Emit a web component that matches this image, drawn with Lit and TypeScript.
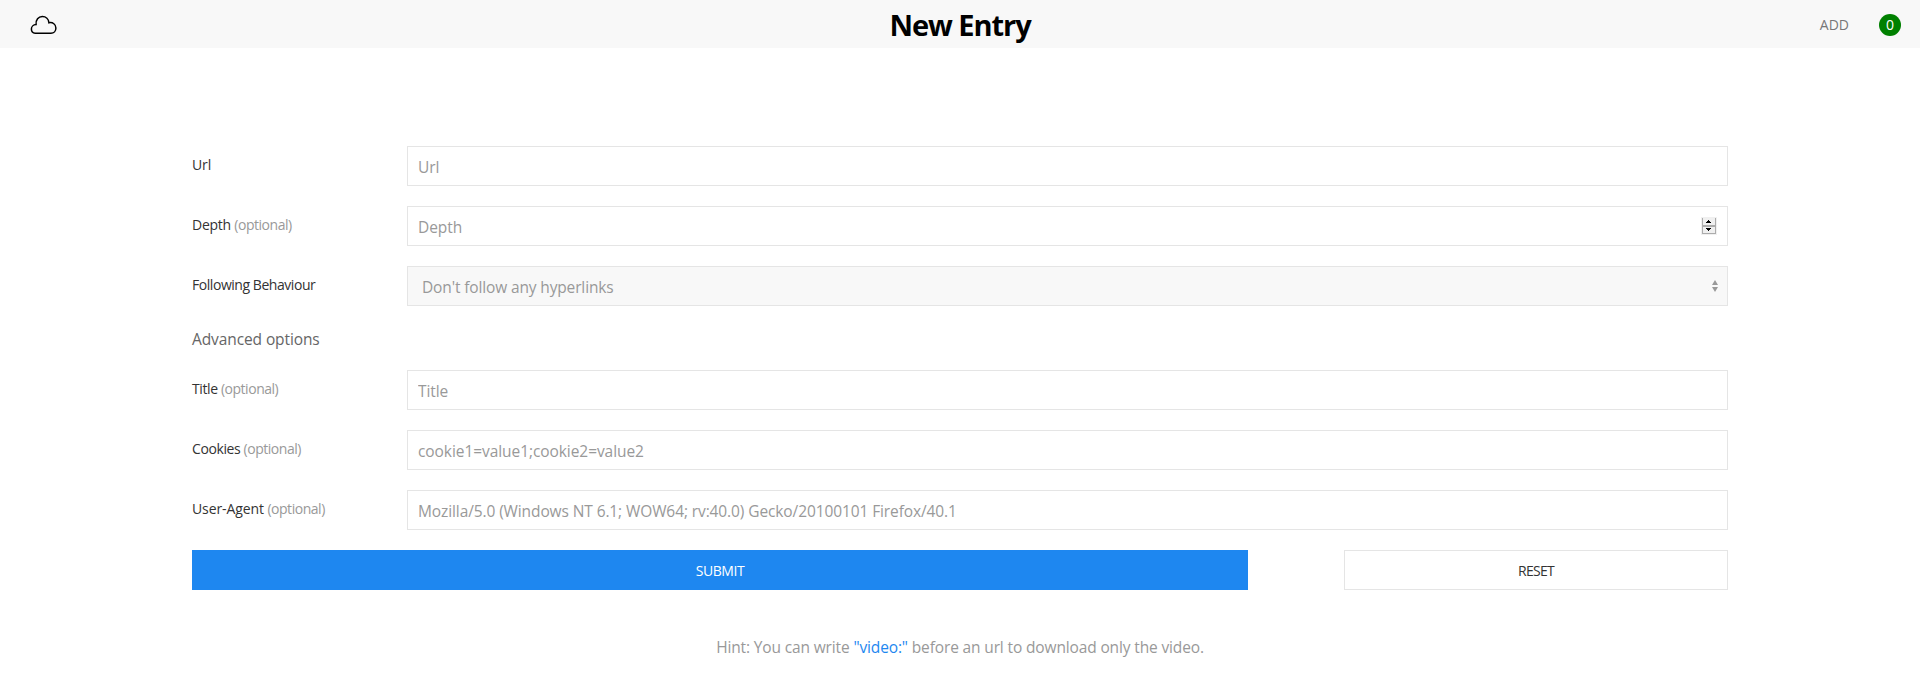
import { LitElement, html, css, nothing } from "lit";

interface Field {
  id: string;
  label: string;
  placeholder: string;
  optional?: boolean;
  stepper?: boolean;
}

const MAIN: Field[] = [
  { id: "url", label: "Url", placeholder: "Url" },
  { id: "depth", label: "Depth", placeholder: "Depth", optional: true, stepper: true },
];

const ADVANCED: Field[] = [
  { id: "title", label: "Title", placeholder: "Title", optional: true },
  { id: "cookies", label: "Cookies", placeholder: "cookie1=value1;cookie2=value2", optional: true },
  {
    id: "agent",
    label: "User-Agent",
    placeholder: "Mozilla/5.0 (Windows NT 6.1; WOW64; rv:40.0) Gecko/20100101 Firefox/40.1",
    optional: true,
  },
];

class AppRoot extends LitElement {
  static styles = css`
    :host {
      display: block;
      height: 674px;
      overflow: hidden;
      background: #fff;
      color: #999;
      font-family: "Segoe UI", "Open Sans", sans-serif;
      font-size: 15.5px;
      letter-spacing: -0.07px;
    }
    * { box-sizing: border-box; }
    header {
      display: grid;
      grid-template-columns: 1fr auto 1fr;
      align-items: center;
      height: 48px;
      background: #f8f8f8;
    }
    .cloud { display: block; margin-left: 30px; }
    h1 {
      margin: 0;
      padding-top: 1px;
      font-size: 29px;
      line-height: 48px;
      letter-spacing: -1.05px;
      color: #000;
    }
    .nav {
      display: flex;
      justify-content: flex-end;
      align-items: center;
      gap: 30px;
      padding-right: 19px;
      font-size: 14px;
      letter-spacing: 0;
      color: #777;
    }
    .badge {
      width: 22px;
      height: 22px;
      border-radius: 50%;
      background: #008000;
      color: #fff;
      line-height: 22px;
      text-align: center;
    }
    form {
      display: flex;
      flex-direction: column;
      gap: 20px;
      width: 1536px;
      margin: 98px auto 0;
    }
    .row { display: grid; grid-template-columns: 215px 1fr; height: 40px; }
    .row label {
      font-size: 14px;
      line-height: 38px;
      color: #333;
      white-space: pre;
    }
    .url-label { letter-spacing: -0.1px; }
    .depth-label { letter-spacing: -0.25px; }
    .behaviour-label { letter-spacing: -0.45px; }
    .title-label { letter-spacing: -0.4px; }
    .cookies-label { letter-spacing: -0.4px; }
    .agent-label { letter-spacing: -0.1px; }
    .optional { color: #999; letter-spacing: -0.47px; }
    .control {
      display: flex;
      align-items: center;
      border: 1px solid #e5e5e5;
      background: #fff;
    }
    .control.select { background: #f8f8f8; }
    input, select {
      flex: 1;
      min-width: 0;
      height: 38px;
      margin: 0;
      padding: 2px 10px 0;
      border: 0;
      outline: 0;
      appearance: none;
      background: transparent;
      color: #999;
      font: inherit;
      letter-spacing: inherit;
    }
    input::placeholder { color: #999; opacity: 1; }
    #agent { letter-spacing: -0.105px; }
    select { padding-left: 14px; letter-spacing: -0.14px; opacity: 1; }
    .stepper { flex: none; margin-right: 10px; }
    .arrows { flex: none; margin-right: 9px; }
    .advanced {
      height: 24px;
      padding-top: 1px;
      line-height: 24px;
      letter-spacing: -0.1px;
      color: #666;
    }
    .actions { display: grid; grid-template-columns: 1056px 384px; justify-content: space-between; }
    button {
      height: 40px;
      padding: 1px 0 0;
      border: 1px solid #e5e5e5;
      background: #fff;
      color: #333;
      font: inherit;
      font-size: 14px;
      letter-spacing: -0.7px;
    }
    .primary { border-color: #1e87f0; background: #1e87f0; color: #fff; letter-spacing: -0.4px; }
    .hint {
      margin: 45px 0 0;
      line-height: 24px;
      text-align: center;
      letter-spacing: -0.14px;
    }
    .hint span { color: #1e87f0; }
  `;

  private field(f: Field) {
    return html`<div class="row">
      <label for=${f.id} class="${f.id}-label">${f.label}${f.optional ? html` <span class="optional">(optional)</span>` : nothing}</label>
      <div class="control">
        <input id=${f.id} placeholder=${f.placeholder} />
        ${f.stepper
          ? html`<svg class="stepper" width="16" height="18" viewBox="0 0 16 18" shape-rendering="crispEdges">
              <path fill="#f0f0f0" d="M0 0h16v18H0z" />
              <path fill="#acacac" d="M1 1h1v16H1zM14 1h1v16h-1zM1 8h14v2H1zM1 16h14v1H1z" />
              <path fill="#000" d="M7 3h1v1h1v1h1v1H5V5h1V4h1zM5 11h5v1H9v1H8v1H7v-1H6v-1H5z" />
            </svg>`
          : nothing}
      </div>
    </div>`;
  }

  render() {
    return html`
      <header>
        <svg class="cloud" width="28" height="20" viewBox="30 14 28 20" fill="none" stroke="#000" stroke-width="1.5">
          <path d="M35.2 32.3C33 32 31.4 30.3 31.4 28C31.4 25.7 33.3 23.7 36.1 23.6C35.6 18.9 38.4 15.6 42.3 15.6C46 15.6 48.6 18.2 48.9 21.8C52.8 20.9 55.9 23.6 55.9 26.9C55.9 29.9 53.9 32.3 50.9 32.3Z" />
        </svg>
        <h1>New Entry</h1>
        <div class="nav"><span>ADD</span><span class="badge">0</span></div>
      </header>
      <form>
        ${MAIN.map((f) => this.field(f))}
        <div class="row">
          <label for="behaviour" class="behaviour-label">Following Behaviour</label>
          <div class="control select">
            <select id="behaviour"><option>Don't follow any hyperlinks</option></select>
            <svg class="arrows" width="6" height="12" viewBox="0 0 6 12" fill="#999">
              <path d="M3 0L6 5H0zM0 7H6L3 12z" />
            </svg>
          </div>
        </div>
        <div class="advanced">Advanced options</div>
        ${ADVANCED.map((f) => this.field(f))}
        <div class="actions">
          <button type="button" class="primary">SUBMIT</button>
          <button type="button">RESET</button>
        </div>
      </form>
      <p class="hint">Hint: You can write <span>"video:"</span> before an url to download only the video.</p>
    `;
  }
}

customElements.define("app-root", AppRoot);
